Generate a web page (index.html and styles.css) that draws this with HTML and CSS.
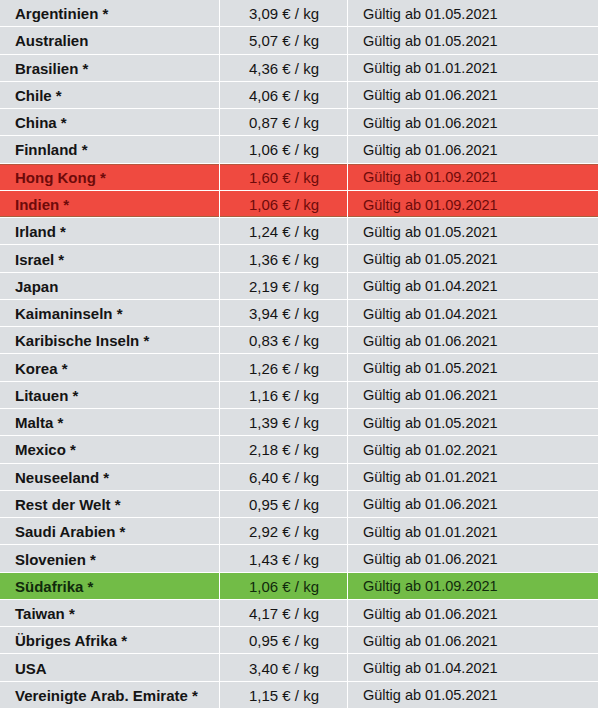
FILE: index.html
```html
<!DOCTYPE html>
<html lang="de">
<head>
<meta charset="utf-8">
<title>Preise</title>
<link rel="stylesheet" href="styles.css">
</head>
<body>
<div class="table">
  <div class="row"><div class="cell name">Argentinien *</div><div class="cell price">3,09 € / kg</div><div class="cell date">Gültig ab 01.05.2021</div></div>
  <div class="row"><div class="cell name">Australien</div><div class="cell price">5,07 € / kg</div><div class="cell date">Gültig ab 01.05.2021</div></div>
  <div class="row"><div class="cell name">Brasilien *</div><div class="cell price">4,36 € / kg</div><div class="cell date">Gültig ab 01.01.2021</div></div>
  <div class="row"><div class="cell name">Chile *</div><div class="cell price">4,06 € / kg</div><div class="cell date">Gültig ab 01.06.2021</div></div>
  <div class="row"><div class="cell name">China *</div><div class="cell price">0,87 € / kg</div><div class="cell date">Gültig ab 01.06.2021</div></div>
  <div class="row"><div class="cell name">Finnland *</div><div class="cell price">1,06 € / kg</div><div class="cell date">Gültig ab 01.06.2021</div></div>
  <div class="row red first"><div class="cell name">Hong Kong *</div><div class="cell price">1,60 € / kg</div><div class="cell date">Gültig ab 01.09.2021</div></div>
  <div class="row red last"><div class="cell name">Indien *</div><div class="cell price">1,06 € / kg</div><div class="cell date">Gültig ab 01.09.2021</div></div>
  <div class="row"><div class="cell name">Irland *</div><div class="cell price">1,24 € / kg</div><div class="cell date">Gültig ab 01.05.2021</div></div>
  <div class="row"><div class="cell name">Israel *</div><div class="cell price">1,36 € / kg</div><div class="cell date">Gültig ab 01.05.2021</div></div>
  <div class="row"><div class="cell name">Japan</div><div class="cell price">2,19 € / kg</div><div class="cell date">Gültig ab 01.04.2021</div></div>
  <div class="row"><div class="cell name">Kaimaninseln *</div><div class="cell price">3,94 € / kg</div><div class="cell date">Gültig ab 01.04.2021</div></div>
  <div class="row"><div class="cell name">Karibische Inseln *</div><div class="cell price">0,83 € / kg</div><div class="cell date">Gültig ab 01.06.2021</div></div>
  <div class="row"><div class="cell name">Korea *</div><div class="cell price">1,26 € / kg</div><div class="cell date">Gültig ab 01.05.2021</div></div>
  <div class="row"><div class="cell name">Litauen *</div><div class="cell price">1,16 € / kg</div><div class="cell date">Gültig ab 01.06.2021</div></div>
  <div class="row"><div class="cell name">Malta *</div><div class="cell price">1,39 € / kg</div><div class="cell date">Gültig ab 01.05.2021</div></div>
  <div class="row"><div class="cell name">Mexico *</div><div class="cell price">2,18 € / kg</div><div class="cell date">Gültig ab 01.02.2021</div></div>
  <div class="row"><div class="cell name">Neuseeland *</div><div class="cell price">6,40 € / kg</div><div class="cell date">Gültig ab 01.01.2021</div></div>
  <div class="row"><div class="cell name">Rest der Welt *</div><div class="cell price">0,95 € / kg</div><div class="cell date">Gültig ab 01.06.2021</div></div>
  <div class="row"><div class="cell name">Saudi Arabien *</div><div class="cell price">2,92 € / kg</div><div class="cell date">Gültig ab 01.01.2021</div></div>
  <div class="row"><div class="cell name">Slovenien *</div><div class="cell price">1,43 € / kg</div><div class="cell date">Gültig ab 01.06.2021</div></div>
  <div class="row green"><div class="cell name">Südafrika *</div><div class="cell price">1,06 € / kg</div><div class="cell date">Gültig ab 01.09.2021</div></div>
  <div class="row"><div class="cell name">Taiwan *</div><div class="cell price">4,17 € / kg</div><div class="cell date">Gültig ab 01.06.2021</div></div>
  <div class="row"><div class="cell name">Übriges Afrika *</div><div class="cell price">0,95 € / kg</div><div class="cell date">Gültig ab 01.06.2021</div></div>
  <div class="row"><div class="cell name">USA</div><div class="cell price">3,40 € / kg</div><div class="cell date">Gültig ab 01.04.2021</div></div>
  <div class="row"><div class="cell name">Vereinigte Arab. Emirate *</div><div class="cell price">1,15 € / kg</div><div class="cell date">Gültig ab 01.05.2021</div></div>
</div>
</body>
</html>
```
FILE: styles.css
```css
html, body {
  margin: 0;
  padding: 0;
  background: #ffffff;
}

body {
  font-family: "Liberation Sans", Arial, sans-serif;
  font-size: 15px;
  color: #141414;
}

.table {
  width: 598px;
  height: 708px;
  display: grid;
  grid-template-columns: 219px 127px 250px;
  grid-template-rows: repeat(26, 1fr);
  gap: 1px;
  background: #ffffff;
}

.row {
  display: contents;
}

.cell {
  background: #dcdfe2;
  display: flex;
  align-items: center;
  padding-top: 1px;
  white-space: nowrap;
  overflow: hidden;
}

.name {
  font-weight: bold;
  padding-left: 15px;
}

.price {
  justify-content: flex-end;
  padding-right: 28px;
}

.date {
  padding-left: 15px;
  font-size: 14.5px;
}

.red .cell {
  background: #ef4a40;
  color: #6e0a0a;
}

.red.first .cell {
  box-shadow: inset 0 1px 0 #b4583e;
}

.red.last .cell {
  box-shadow: inset 0 -1px 0 #a8603e;
}

.green .cell {
  background: #72bc47;
  color: #102a0c;
}
```
